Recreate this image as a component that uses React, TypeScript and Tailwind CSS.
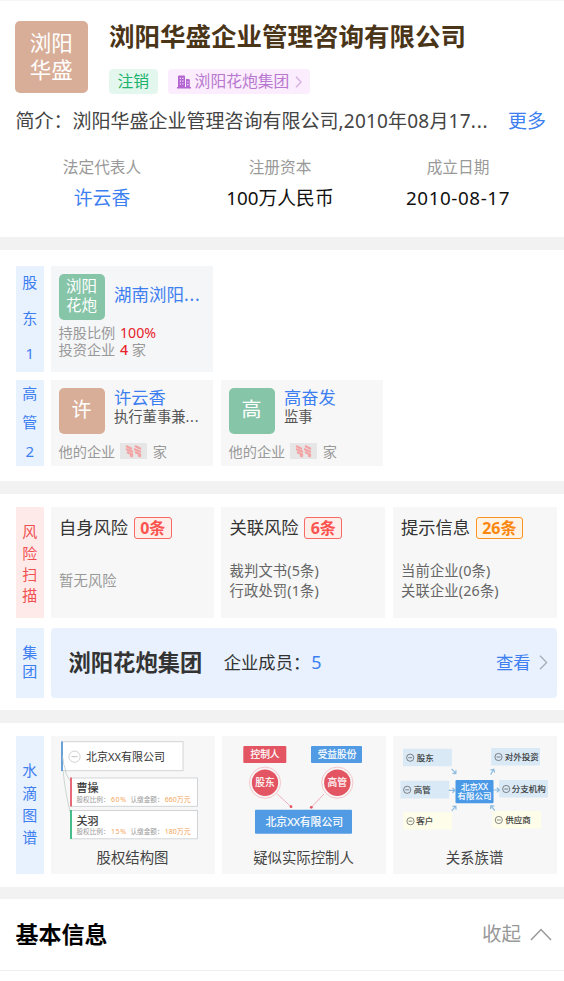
import React from 'react';

interface SideLabelProps {
  chars: string[];
  className: string;
}

const SideLabel: React.FC<SideLabelProps> = ({ chars, className }) => (
  <div className={`flex w-[28.5px] shrink-0 flex-col items-center text-[15px] ${className}`}>
    {chars.map((c, i) => (
      <span key={i}>{c}</span>
    ))}
  </div>
);

const Divider = ({ className }: { className: string }) => <div className={`bg-[#f2f2f2] ${className}`} />;

// trailing dots are set wider than the font's own
const Dots = () => <span className="tracking-[0.8px]">...</span>;

interface PersonCardProps {
  initial: string;
  name: string;
  role: string;
  truncated?: boolean;
  avatarClass: string;
}

const PersonCard: React.FC<PersonCardProps> = ({ initial, name, role, truncated, avatarClass }) => (
  <div className="flex w-[162px] flex-col bg-[#f7f7f7] pt-2 pl-2">
    <div className="flex gap-[9.5px]">
      <div className={`flex h-[46px] w-[46px] items-center justify-center rounded-[5px] pb-px text-[20px] leading-none text-white ${avatarClass}`}>{initial}</div>
      <div className="flex flex-col whitespace-nowrap">
        <p className="text-[17.3px] leading-[20px] text-[#3d7ff0]">{name}</p>
        <p className="text-[14.3px] leading-[18px] text-[#555]">{role}{truncated && <Dots />}</p>
      </div>
    </div>
    <div className="mt-2 flex items-center text-[14.2px] leading-[19px] text-[#999]">
      <span>他的企业</span>
      <span className="ml-[5px] flex h-[16px] w-[27px] items-center justify-center bg-[#e6e6e6]">
        <svg className="blur-[0.6px]" width="18" height="14" viewBox="0 0 18 14" fill="none" stroke="#f3a3a3" strokeWidth="2">
          <path d="M1 2l6 3M1 5l7 3M2 8l6 3M5 11.5l3 1M10 2l6 3M9 5l7 3M10 8l6 3M13 11.5l3 1" />
        </svg>
      </span>
      <span className="ml-[5.5px]">家</span>
    </div>
  </div>
);

interface RiskCardProps {
  title: string;
  count: string;
  badgeClass: string;
  lines: string[];
}

const RiskCard: React.FC<RiskCardProps> = ({ title, count, badgeClass, lines }) => (
  <div className="flex flex-col bg-[#f7f7f7] pt-[10px] pl-[8.5px] whitespace-nowrap">
    <div className="flex items-center gap-[5.5px]">
      <span className="text-[17.3px] leading-[22px] text-[#333]">{title}</span>
      <span className={`rounded-[3px] border-[1.5px] px-[5.5px] text-[16px] leading-[20px] font-bold ${badgeClass}`}>{count}</span>
    </div>
    <div className="flex h-[64px] flex-col justify-center pt-[20px] text-[14.3px] leading-[20px] tracking-[0.15px]">
      {lines.map(l => (
        <p key={l} className={l === '暂无风险' ? 'text-[#999]' : 'text-[#666]'}>{l}</p>
      ))}
    </div>
  </div>
);

const GraphCard = ({ title, children }: { title: string; children: React.ReactNode }) => (
  <div className="flex flex-col items-center bg-[#f7f7f7]">
    <svg className="h-[112px] w-[164px]" viewBox="0 0 164 112">{children}</svg>
    <p className="text-[14.4px] leading-[20px] text-[#444]">{title}</p>
  </div>
);

const holders = [
  { name: '曹操', ratio: '60%', amount: '660万元', y: 42, color: '#e84a5a' },
  { name: '关羽', ratio: '15%', amount: '180万元', y: 74.5, color: '#1db373' },
];

const relations = [
  { label: '股东', x: 10, y: 12.7, fill: '#d9e9f6', cx: 17.2, tx: 23.8 },
  { label: '高管', x: 7.5, y: 44.8, fill: '#d9e9f6', cx: 14.2, tx: 20.8 },
  { label: '客户', x: 10.2, y: 76.2, fill: '#fdfdea', cx: 17.5, tx: 23.2 },
  { label: '对外投资', x: 98.2, y: 12, fill: '#d9e9f6', cx: 105.5, tx: 111.8 },
  { label: '分支机构', x: 106.2, y: 44, fill: '#d9e9f6', cx: 113.2, tx: 118.8 },
  { label: '供应商', x: 99.2, y: 75, fill: '#fdfdea', cx: 105.8, tx: 112.2 },
];

// x, y and rotation of each small arrow around the centre company
const arrows = [
  [61, 35.5, 48],
  [99.4, 35.6, -60],
  [59.2, 54.3, 0],
  [103.5, 54, 0],
  [61, 72.3, -48],
  [99.6, 71.8, -128],
];

const App: React.FC = () => {
  return (
    <div className="h-[981px] w-[564px] overflow-hidden bg-white font-['Noto_Sans','Noto_Sans_CJK_SC',sans-serif]">
      <header className="h-[237px] border-t border-[#f5f5f5] px-[15px] pt-5">
        <div className="flex gap-[21.5px]">
          <div className="flex h-[72px] w-[72.5px] flex-col items-center justify-center rounded-[5px] bg-[#d9ae98] pb-[2px] text-[21.5px] leading-[27px] text-white">
            <span>浏阳</span>
            <span>华盛</span>
          </div>
          <div className="flex flex-col">
            <h1 className="-mt-px text-[25.5px] leading-[32px] font-bold text-[#4a3518]">浏阳华盛企业管理咨询有限公司</h1>
            <div className="mt-[17px] flex gap-[10px] text-[15.8px] leading-[25px]">
              <span className="rounded-[4px] bg-[#e4f7ee] px-[8.5px] text-[#1bb26c]">注销</span>
              <span className="flex items-center rounded-[4px] bg-[#fbedfd] pr-[8px] pl-[9px] text-[#b878d0]">
                <svg className="mr-[4px]" width="14" height="14" viewBox="0 0 14 14">
                  <path d="M1 1.5Q1 .5 2 .5H7Q8 .5 8 1.5V12H9V4H11.5Q12.8 4 12.8 5.3V12H14V13.5H0V12H1Z" fill="#b565d2" />
                  <path d="M2.8 3.4h1.2M5.2 3.4h1.2M2.8 6.2h1.2M5.2 6.2h1.2M2.8 9h1.2M5.2 9h1.2M10.2 7h1.2M10.2 9.6h1.2" stroke="#fbedfd" strokeWidth="1.2" />
                </svg>
                浏阳花炮集团
                <svg className="ml-[6px]" width="7" height="12" viewBox="0 0 7 12" fill="none" stroke="#d3addf" strokeWidth="1.3">
                  <path d="M1 .8L6 6L1 11.2" />
                </svg>
              </span>
            </div>
          </div>
        </div>

        <div className="mt-[14px] flex justify-between pr-[3px] pl-[0.5px] text-[19px] leading-[26px] whitespace-nowrap">
          <p className="text-[#444]">
            简介：浏阳华盛企业管理咨询有限公司<span className="tracking-[0.2px]">,2010年08月17</span><Dots />
          </p>
          <a className="text-[#3d7ff0]">更多</a>
        </div>

        <div className="mt-[22px] mr-[2px] -ml-[2px] grid grid-cols-3 text-center">
          <div>
            <p className="text-[15.7px] leading-[22px] text-[#999]">法定代表人</p>
            <p className="mt-[7px] text-[18.8px] leading-[26px] text-[#3d7ff0]">许云香</p>
          </div>
          <div>
            <p className="text-[15.7px] leading-[22px] text-[#999]">注册资本</p>
            <p className="mt-[7px] text-[18.8px] leading-[26px] text-[#111]">100万人民币</p>
          </div>
          <div>
            <p className="text-[15.7px] leading-[22px] text-[#999]">成立日期</p>
            <p className="mt-[7px] text-[18.8px] leading-[26px] tracking-[0.6px] text-[#111]">2010-08-17</p>
          </div>
        </div>
      </header>

      <Divider className="h-[13px]" />

      <section className="flex h-[231px] flex-col gap-2 px-[15.5px] pt-[15.5px]">
        <div className="flex h-[106px] gap-[6.5px]">
          <SideLabel chars={['股', '东', '1']} className="justify-center bg-[#e8f1fe] leading-[35.5px] text-[#3d7ff0]" />
          <div className="flex w-[162px] flex-col bg-[#f5f6f8] pt-2 pl-2">
            <div className="flex items-center gap-[9.5px]">
              <div className="flex h-[46px] w-[46px] flex-col items-center justify-center rounded-[5px] bg-[#86c5a8] pb-[2px] text-[15.5px] leading-[19px] text-white">
                <span>浏阳</span>
                <span>花炮</span>
              </div>
              <p className="pb-[6px] text-[17.5px] leading-[24px] whitespace-nowrap text-[#3d7ff0]">湖南浏阳<Dots /></p>
            </div>
            <p className="mt-[4px] text-[14.2px] leading-[17px] text-[#999]">
              持股比例 <span className="ml-[1px] text-[#e6222a]">100%</span>
            </p>
            <p className="text-[14.2px] leading-[17px] text-[#999]">
              投资企业 <span className="ml-[1px] font-medium text-[#e6222a]">4</span> 家
            </p>
          </div>
        </div>
        <div className="flex h-[86px] gap-[6.5px]">
          <SideLabel chars={['高', '管', '2']} className="justify-center bg-[#e8f1fe] leading-[28.7px] text-[#3d7ff0]" />
          <div className="flex gap-2">
            <PersonCard initial="许" name="许云香" role="执行董事兼" truncated avatarClass="bg-[#d9ae98]" />
            <PersonCard initial="高" name="高奋发" role="监事" avatarClass="bg-[#86c5a8]" />
          </div>
        </div>
      </section>

      <Divider className="h-[13px]" />

      <section className="flex h-[216px] flex-col gap-[10px] pt-[13px] pr-[7px] pl-[15.5px]">
        <div className="flex h-[111px] gap-[6.5px]">
          <SideLabel chars={['风', '险', '扫', '描']} className="justify-center bg-[#ffeaea] pt-[3px] leading-[21.3px] text-[#f0504f]" />
          <div className="grid grow grid-cols-[163px_164px_164px] gap-[7.5px]">
            <RiskCard title="自身风险" count="0条" badgeClass="border-[#f86a66] bg-[#fdeeea] text-[#fa5350]" lines={['暂无风险']} />
            <RiskCard title="关联风险" count="6条" badgeClass="border-[#f86a66] bg-[#fdeeea] text-[#fa5350]" lines={['裁判文书(5条)', '行政处罚(1条)']} />
            <RiskCard title="提示信息" count="26条" badgeClass="border-[#fb9422] bg-[#fff3e6] text-[#fb8710]" lines={['当前企业(0条)', '关联企业(26条)']} />
          </div>
        </div>
        <div className="flex h-[70px] gap-[6.5px]">
          <SideLabel chars={['集', '团']} className="justify-center bg-[#e8f1fe] pb-[2px] leading-[19px] text-[#3d7ff0]" />
          <div className="flex grow items-center rounded-[4px] bg-[#e8f1fd] pr-[9px] pb-px pl-[18px] text-[17.3px]">
            <span className="text-[22.3px] font-bold text-[#333]">浏阳花炮集团</span>
            <span className="ml-[21.5px] text-[#333]">企业成员：</span>
            <span className="ml-px text-[18px] text-[#3d7ff0]">5</span>
            <a className="ml-auto text-[#3d7ff0]">查看</a>
            <svg className="ml-[8.5px]" width="9" height="15" viewBox="0 0 9 15" fill="none" stroke="#aaafb8" strokeWidth="1.4">
              <path d="M1 .8L7.6 7.5L1 14.2" />
            </svg>
          </div>
        </div>
      </section>

      <Divider className="h-[13px]" />

      <section className="flex h-[164px] gap-[6.5px] pt-[13px] pr-[7px] pb-[13px] pl-[15.5px]">
        <SideLabel chars={['水', '滴', '图', '谱']} className="justify-center bg-[#e8f1fe] pb-[2px] leading-[22.4px] text-[#3d7ff0]" />
        <div className="grid grow grid-cols-[164px_164px_164px] gap-[7px]">
          <GraphCard title="股权结构图">
            <path d="M11 20Q12 34 19 45M11 20Q12 46 19 76" fill="none" stroke="#b7c9c0" strokeWidth="0.7" />
            <rect x="11" y="5.7" width="121" height="29" fill="#fff" stroke="#ccd0d3" strokeWidth="0.9" />
            <path d="M11 5.5v29.5" stroke="#4a90d9" strokeWidth="1.6" />
            <path d="M11.5 20Q12.5 30 15 35" fill="none" stroke="#b7c9c0" strokeWidth="0.7" />
            <circle cx="23.5" cy="20.7" r="5.6" fill="none" stroke="#ccc" strokeWidth="0.9" />
            <path d="M20.5 20.7h6" stroke="#bbb" strokeWidth="0.9" />
            <text x="35" y="24.8" fontSize="11" fill="#333">北京XX有限公司</text>
            {holders.map(h => (
              <g key={h.name}>
                <rect x="20" y={h.y} width="126.5" height="28.3" fill="#fff" stroke="#ccd0d3" strokeWidth="0.9" />
                <path d={`M20 ${h.y - 0.4}v29`} stroke={h.color} strokeWidth="1.6" />
                <text x="25.5" y={h.y + 14} fontSize="11" fill="#333" stroke="#333" strokeWidth="0.2">{h.name}</text>
                <g fontSize="7" fill="#999">
                  <text x="25.5" y={h.y + 23.6} textLength="33" lengthAdjust="spacingAndGlyphs">股权比例：</text>
                  <text x="60" y={h.y + 23.6} fill="#f5a55a" textLength="15">{h.ratio}</text>
                  <text x="79.5" y={h.y + 23.6} textLength="33" lengthAdjust="spacingAndGlyphs">认缴金额：</text>
                  <text x="113.8" y={h.y + 23.6} fill="#f5a55a" textLength="26">{h.amount}</text>
                </g>
              </g>
            ))}
          </GraphCard>

          <GraphCard title="疑似实际控制人">
            <rect x="21.3" y="10" width="43" height="17" rx="1" fill="#e35562" />
            <rect x="89" y="10" width="51" height="17" rx="1" fill="#519be4" />
            <circle cx="43" cy="46.7" r="15.6" fill="none" stroke="#f3b9be" strokeWidth="0.8" />
            <circle cx="43" cy="46.7" r="13.2" fill="#e35562" />
            <circle cx="115.3" cy="46.7" r="15.6" fill="none" stroke="#f3b9be" strokeWidth="0.8" />
            <circle cx="115.3" cy="46.7" r="13.2" fill="#e35562" />
            <path d="M55.3 58L69 70.7M102 58L89.3 71.3" stroke="#eda5b5" strokeWidth="0.9" />
            <circle cx="69" cy="70.7" r="1.4" fill="#e35562" />
            <circle cx="89.3" cy="71.3" r="1.4" fill="#e35562" />
            <rect x="33" y="73.7" width="97" height="24" rx="1" fill="#519be4" />
            <g fill="#fff" stroke="#fff" strokeWidth="0.2" fontSize="9.7" textAnchor="middle">
              <text x="43" y="22.3">控制人</text>
              <text x="115" y="22.3">受益股份</text>
              <text x="43" y="50.4">股东</text>
              <text x="115.3" y="50.4">高管</text>
              <text x="82.3" y="89.9" fontSize="10.8">北京XX有限公司</text>
            </g>
          </GraphCard>

          <GraphCard title="关系族谱">
            {relations.map(r => (
              <g key={r.label}>
                <rect x={r.x} y={r.y} width="48.8" height="17.6" rx="0.5" fill={r.fill} />
                <circle cx={r.cx} cy={r.y + 9} r="3.6" fill="none" stroke="#555" strokeWidth="0.7" />
                <path d={`M${r.cx - 1.9} ${r.y + 9}h3.8`} stroke="#555" strokeWidth="0.7" />
                <text x={r.tx} y={r.y + 12.2} fontSize="8.5" fill="#333" stroke="#333" strokeWidth="0.15">{r.label}</text>
              </g>
            ))}
            {arrows.map(([x, y, deg], i) => (
              <path key={i} d="M-3.5 0h6M.3-2.4L2.8 0L.3 2.4" transform={`translate(${x} ${y}) rotate(${deg})`} fill="none" stroke="#8dbbe0" strokeWidth="1.2" />
            ))}
            <rect x="62.5" y="44" width="38" height="23.3" rx="1" fill="#4a99e6" />
            <g fill="#fff" stroke="#fff" strokeWidth="0.15" fontSize="8.5" textAnchor="middle">
              <text x="81.5" y="53.9">北京XX</text>
              <text x="81.5" y="63.2">有限公司</text>
            </g>
          </GraphCard>
        </div>
      </section>

      <Divider className="h-[12px]" />

      <section className="flex h-[72px] items-center border-b border-[#eee] pr-[12px] pb-px pl-[15.5px]">
        <h2 className="text-[23px] font-bold text-black">基本信息</h2>
        <span className="ml-auto text-[19.5px] text-[#999]">收起</span>
        <svg className="ml-[9px]" width="22" height="13" viewBox="0 0 22 13" fill="none" stroke="#999" strokeWidth="1.5">
          <path d="M1 12L11 1.5L21 12" />
        </svg>
      </section>
    </div>
  );
};

export default App;
